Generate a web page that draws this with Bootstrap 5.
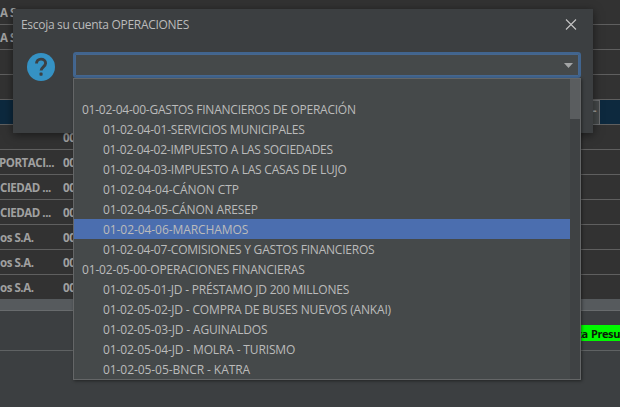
<!DOCTYPE html>
<html lang="es">
<head>
<meta charset="utf-8">
<meta name="viewport" content="width=device-width, initial-scale=1">
<title>Escoja su cuenta</title>
<link href="https://cdn.jsdelivr.net/npm/bootstrap@5.3.0/dist/css/bootstrap.min.css" rel="stylesheet">
<style>
  body { width: 620px; height: 407px; background: #3c3f41; color: #bbb; font: 12px/20px "Open Sans", "Noto Sans", sans-serif; }
  .grid-row { height: 25px; background: #323232; border-bottom: 1px solid #5f5f5f; font-size: 11.5px; font-weight: 700; line-height: 26px; color: #a0a0a0; letter-spacing: -.45px; white-space: nowrap; }
  .grid-row.chosen { background: #0d293e; }
  .name-cell { width: 63px; }
  .cut-name { margin-left: -1px; width: 64px; }
  .cell-btn { width: 20px; height: 25px; margin-right: 20px; padding-right: 3px; border: 1px solid #6a6c6e; background: #45494a; line-height: 20px; }
  .hbar { height: 12px; background: #565a5d; border-bottom: 1px solid #686b6d; }
  .footer-strip { height: 40px; border-bottom: 1px solid #5f6263; }
  .budget { width: 49px; height: 16px; margin-top: 14px; background: #00f900; color: #0b1a0b; font-weight: 700; font-size: 11px; line-height: 18px; letter-spacing: -.4px; word-spacing: .6px; white-space: nowrap; text-align: right; }
  .dlg { left: 13px; top: 9px; width: 580px; height: 124px; background: #3c3f41; box-shadow: 0 2px 9px rgba(0,0,0,.5); z-index: 2; }
  .dlg-title { height: 32px; padding: 0 16px 0 8px; letter-spacing: -.3px; }
  .dlg-body { padding: 11px 12px 0 14px; }
  .help-icon { margin-top: 1px; }
  .combo { width: 508px; height: 26px; border: 2px solid #41658f; border-radius: 3px; background: #45494a; box-shadow: inset 0 0 0 1px #46678f; padding-right: 6px; }
  .options { left: 73px; top: 78px; width: 508px; height: 302px; border: 1px solid #646667; background: #45494a; box-shadow: 1px 1px 3px rgba(0,0,0,.45); z-index: 3; }
  .opt { height: 20px; line-height: 22px; padding-left: 8px; white-space: nowrap; }
  .opt.sub { padding-left: 29px; }
  .opt.active-opt { background: #4b6eaf; }
  .track { width: 10px; background: #3f4244; }
  .thumb { height: 40px; background: #5a5d5f; }
  .t05 { letter-spacing: -.07px; }
  .t10 { letter-spacing: -.14px; }
  .t15 { letter-spacing: -.17px; }
  .t20 { letter-spacing: -.21px; }
  .t25 { letter-spacing: -.24px; }
</style>
<script src="https://cdn.jsdelivr.net/npm/bootstrap@5.3.0/dist/js/bootstrap.bundle.min.js"></script>
</head>
<body class="position-relative overflow-hidden">

<main>
  <div class="grid-row"><div class="name-cell">A S</div></div>
  <div class="grid-row"><div class="name-cell">A S</div></div>
  <div class="grid-row"></div>
  <div class="grid-row"></div>
  <div class="grid-row chosen d-flex justify-content-end"><div class="cell-btn text-end">-</div></div>
  <div class="grid-row d-flex"><div class="name-cell"></div><div>00</div></div>
  <div class="grid-row d-flex"><div class="name-cell cut-name">PORTACI...</div><div>00</div></div>
  <div class="grid-row d-flex"><div class="name-cell">CIEDAD ...</div><div>00</div></div>
  <div class="grid-row d-flex"><div class="name-cell">CIEDAD ...</div><div>00</div></div>
  <div class="grid-row d-flex"><div class="name-cell">os S.A.</div><div>00</div></div>
  <div class="grid-row d-flex"><div class="name-cell">os S.A.</div><div>00</div></div>
  <div class="grid-row d-flex border-bottom-0" style="height:24px"><div class="name-cell">os S.A.</div><div>00</div></div>
  <div class="hbar"></div>
  <div class="footer-strip d-flex justify-content-end"><div class="budget">ta Presu</div></div>
</main>

<section class="position-absolute dlg">
  <header class="dlg-title d-flex align-items-center justify-content-between">
    <span>Escoja su cuenta OPERACIONES</span>
    <svg width="12" height="12" viewBox="0 0 12 12" stroke="#c4c4c4" stroke-width="1.1"><path d="M1 .5l10 10M11 .5L1 10.5"/></svg>
  </header>
  <div class="dlg-body d-flex justify-content-between">
    <svg class="help-icon" width="28" height="28" viewBox="0 0 28 28" fill="none"><circle cx="14" cy="14" r="14" fill="#3592c4"/><path d="M9.5 10.6C9.5 7.7 11.4 6.1 14 6.1s4.6 1.6 4.6 4.2c0 3.3-4.5 3.7-4.5 7.2" stroke="#3c4043" stroke-width="2.9"/><rect x="12.5" y="19.6" width="3.1" height="3.1" rx=".8" fill="#3c4043"/></svg>
    <div class="combo d-flex align-items-center justify-content-end">
      <svg width="9" height="5" viewBox="0 0 9 5"><path d="M0 0h9L4.5 5z" fill="#a3a5a6"/></svg>
    </div>
  </div>
</section>

<div class="position-absolute options d-flex">
  <div class="flex-grow-1">
    <div class="opt"></div>
    <div class="opt t25">01-02-04-00-GASTOS FINANCIEROS DE OPERACIÓN</div>
    <div class="opt sub t20">01-02-04-01-SERVICIOS MUNICIPALES</div>
    <div class="opt sub t25">01-02-04-02-IMPUESTO A LAS SOCIEDADES</div>
    <div class="opt sub t20">01-02-04-03-IMPUESTO A LAS CASAS DE LUJO</div>
    <div class="opt sub t05">01-02-04-04-CÁNON CTP</div>
    <div class="opt sub t10">01-02-04-05-CÁNON ARESEP</div>
    <div class="opt sub active-opt t05">01-02-04-06-MARCHAMOS</div>
    <div class="opt sub t20">01-02-04-07-COMISIONES Y GASTOS FINANCIEROS</div>
    <div class="opt t15">01-02-05-00-OPERACIONES FINANCIERAS</div>
    <div class="opt sub t20">01-02-05-01-JD - PRÉSTAMO JD 200 MILLONES</div>
    <div class="opt sub t15">01-02-05-02-JD - COMPRA DE BUSES NUEVOS (ANKAI)</div>
    <div class="opt sub t10">01-02-05-03-JD - AGUINALDOS</div>
    <div class="opt sub t10">01-02-05-04-JD - MOLRA - TURISMO</div>
    <div class="opt sub t05">01-02-05-05-BNCR - KATRA</div>
  </div>
  <div class="track"><div class="thumb"></div></div>
</div>
</body>
</html>
